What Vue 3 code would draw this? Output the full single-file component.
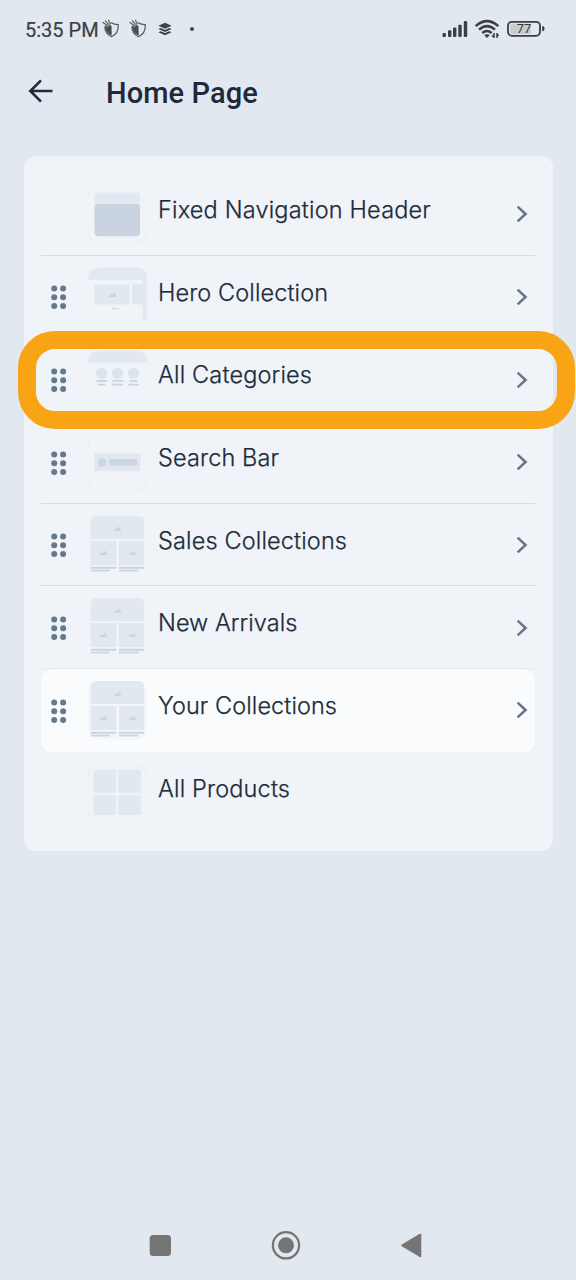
<script setup>
const rows = [
  { label: 'Fixed Navigation Header', kind: 'header', drag: false, arrow: true, w: 272.8 },
  { label: 'Hero Collection', kind: 'hero', drag: true, arrow: true, w: 170 },
  { label: 'All Categories', kind: 'categories', drag: true, arrow: true, w: 154 },
  { label: 'Search Bar', kind: 'search', drag: true, arrow: true, w: 121 },
  { label: 'Sales Collections', kind: 'grid', drag: true, arrow: true, w: 189 },
  { label: 'New Arrivals', kind: 'grid', drag: true, arrow: true, w: 139.3 },
  { label: 'Your Collections', kind: 'grid', drag: true, arrow: true, w: 179 },
  { label: 'All Products', kind: 'products', drag: false, arrow: false, w: 132 },
]
const dots = [0, 1, 2, 3, 4, 5]
</script>

<template>
  <div class="screen">
    <header class="status">
      <span class="time">5:35 PM</span>
      <svg v-for="n in 2" :key="n" class="shield" width="18" height="20" viewBox="0 0 18 20">
        <path d="M7 4.6L9.5 3.8C11.3 5.2 13.6 5.6 16.3 5.6C16.5 11.5 14.5 15.7 9.5 17.8C5.2 15.8 2.9 12 2.8 7.5" fill="none" stroke="#55585c" stroke-width="1.2" />
        <path d="M3 7L7.5 5L9.5 7L9.7 16.8C5.8 15 3.4 12 3 7Z" fill="#494c50" />
        <path d="M1 3.5L4.5 6M3.5 1.8L6 5M6.7 1L7.5 5" stroke="#55585c" stroke-width="1.2" stroke-linecap="round" />
        <path d="M4.3 8L7.5 6.2M6.5 4L9.2 6.5" stroke="#c5cad0" stroke-width="0.8" />
      </svg>
      <svg class="layers" width="14" height="14" viewBox="0 0 14 14">
        <path d="M7 .8L13.6 3.7L7 6.8L.4 3.7Z" fill="#3e4145" />
        <path d="M.4 7L2.7 6L7 8L11.3 6L13.6 7L7 10ZM.4 10.2L2.7 9.2L7 11.1L11.3 9.2L13.6 10.2L7 13.2Z" fill="#3e4145" />
      </svg>
      <i class="more"></i>
      <span class="grow"></span>
      <svg class="system" width="104" height="22" viewBox="0 0 104 22">
        <g fill="#3b3e42">
          <rect x="0.5" y="15" width="3.4" height="4" rx="1" />
          <rect x="6" y="12.3" width="3.4" height="6.7" rx="1" />
          <rect x="11" y="9.5" width="3.4" height="9.5" rx="1" />
          <rect x="16.3" y="6.7" width="3.4" height="12.3" rx="1" />
          <rect x="21.8" y="3" width="3.4" height="16" rx="1" />
        </g>
        <g fill="none" stroke="#3b3e42" stroke-width="2.5">
          <path d="M33.7 8.1Q45 -1.9 56.3 8.1" />
          <path d="M37 11.6Q45 4.6 53 11.6" />
          <path d="M40.3 15Q45 10.9 49.7 15" />
        </g>
        <path d="M42.3 17.2Q45 15.1 47.7 17.2L45 20Z" fill="#3b3e42" />
        <path d="M52 15V20M51.8 18H49.7M55 15V20M55 17.2H57" fill="none" stroke="#3b3e42" stroke-width="1.5" />
        <rect x="66" y="3.8" width="32" height="14" rx="4" fill="none" stroke="#3b3e42" stroke-width="1.8" />
        <path d="M69.5 5.8H89V16H69.5Q68.3 16 68.3 14.5V7.2Q68.3 5.8 69.5 5.8Z" fill="#c8ccd1" />
        <path d="M100.2 8.1Q102.5 8.1 102.5 10.7Q102.5 13.3 100.2 13.3Z" fill="#3b3e42" />
        <text x="82" y="15.2" class="battery" text-anchor="middle">77</text>
      </svg>
    </header>

    <div class="title-bar">
      <svg class="back" width="26" height="26" viewBox="0 0 26 26">
        <path d="M24.5 13H3M13 2.3L2.3 13L13 23.7" fill="none" stroke="#202b40" stroke-width="2.6" />
      </svg>
      <h1>Home Page</h1>
    </div>

    <main class="card">
      <div v-for="(row, i) in rows" :key="row.label" class="row" :class="{ active: i === 6, last: i > 6, faint: i === 5 }">
        <div class="handle">
          <svg v-if="row.drag" width="16" height="24" viewBox="0 0 16 24">
            <circle v-for="d in dots" :key="d" :cx="3.2 + (d % 2) * 8.9" :cy="3.4 + Math.floor(d / 2) * 8.8" r="3" fill="#64798c" />
          </svg>
        </div>

        <svg class="thumb" width="59" height="59" viewBox="0 0 59 59">
          <rect v-if="row.kind === 'grid' && i === 6" x="0.5" y="0.5" width="58" height="58" rx="11" fill="#f3f6fa" />
          <path v-if="['header', 'search', 'products'].includes(row.kind)" d="M.5 13Q.5 .5 13 .5M46 .5Q58.5 .5 58.5 13M58.5 46Q58.5 58.5 46 58.5M13 58.5Q.5 58.5 .5 46" fill="none" stroke="#e6ecf3" />
          <g v-if="row.kind === 'header'">
            <rect x="6.5" y="7.5" width="45.5" height="20" rx="3" fill="#e2e9f0" />
            <rect x="6.5" y="19" width="45.5" height="32.3" rx="4" fill="#c9d3e0" />
          </g>
          <g v-else-if="row.kind === 'hero'">
            <path d="M0 12.8Q0 .5 12 .5H47Q59 .5 59 12V51.5Q59 54.5 55 54.5L54.3 17V12.8Z" fill="#e1e8f0" />
            <rect x="6.5" y="17.5" width="35" height="20" fill="#e1e8f0" />
            <path d="M44 17.5H56V37.5H44Z" fill="#e1e8f0" />
            <path d="M21 30L23 27.3L24.3 28.5L26 25.5L28.5 30Z" fill="#c9d2dd" />
            <g fill="#c3cdd9"><circle cx="25" cy="41.5" r=".8" /><circle cx="27.3" cy="41.5" r=".8" /><circle cx="29.6" cy="41.5" r=".8" /></g>
          </g>
          <g v-else-if="row.kind === 'categories'">
            <path d="M0 12.5Q0 .7 12 .7H47Q59 .7 59 12.5Z" fill="#e1e8f0" />
            <g v-for="n in 3" :key="n">
              <circle :cx="-2.4 + n * 16" cy="23.3" r="5.7" fill="#dce4ed" />
              <rect :x="n === 3 ? 41.5 : -7.8 + n * 16" y="30" :width="n === 3 ? 8 : 11" height="1.8" fill="#cbd5e0" />
              <rect :x="n === 1 ? 10 : -7.8 + n * 16" y="33.7" :width="n === 1 ? 7.5 : 11" height="1.8" fill="#cbd5e0" />
            </g>
          </g>
          <g v-else-if="row.kind === 'search'">
            <rect x="6.3" y="20.3" width="46" height="18" rx="2" fill="#e0e7ef" />
            <circle cx="14" cy="29.3" r="4.2" fill="#cbd6e2" />
            <rect x="21" y="26" width="28" height="6.6" rx="1.5" fill="#cbd6e2" />
          </g>
          <g v-else-if="row.kind === 'grid'">
            <path d="M2.8 23V6Q2.8 0 9 0H50Q56.2 0 56.2 6V23Z" fill="#e1e8f0" />
            <rect x="2.8" y="25" width="25.4" height="24" fill="#e1e8f0" />
            <rect x="31" y="25" width="25.2" height="24" fill="#e1e8f0" />
            <path d="M26 15L28 12L29.5 13.3L30.5 10L33.5 15ZM12 39L14 36L15.3 37.3L17 34.3L19.5 39ZM40.5 39L42.5 36L43.8 37.3L45.5 34.3L48 39Z" fill="#cbd4df" />
            <g fill="#cbd5e1">
              <rect x="2.8" y="50.8" width="25.4" height="2" /><rect x="31" y="50.8" width="25.2" height="2" />
              <rect x="2.8" y="53.7" width="19" height="1.7" /><rect x="31" y="53.7" width="19.5" height="1.7" />
            </g>
          </g>
          <g v-else fill="#e1e8f0">
            <path d="M9 5.5H28V28.7H5.7V8.5Q5.7 5.5 9 5.5ZM30.3 5.5H50Q53 5.5 53 8.5V28.7H30.3ZM5.7 31.5H28V51H8.7Q5.7 51 5.7 48ZM30.3 31.5H53V48Q53 51 50 51H30.3Z" />
          </g>
        </svg>

        <svg class="label" width="300" height="34" viewBox="0 0 300 34">
          <text x="0" y="25" :textLength="row.w">{{ row.label }}</text>
        </svg>
        <svg v-if="row.arrow" class="chevron" width="14" height="18" viewBox="0 0 14 18">
          <path d="M2.6 1.7L10.6 9L2.6 16.3" fill="none" stroke="#64748b" stroke-width="2.5" />
        </svg>
      </div>
      <div class="highlight"></div>
    </main>

    <footer class="navigation">
      <svg width="288" height="32" viewBox="0 0 288 32">
        <rect x="5.7" y="5" width="21.3" height="21" rx="3.5" fill="#757575" />
        <circle cx="142" cy="15.3" r="13.1" fill="none" stroke="#757575" stroke-width="2.3" />
        <circle cx="142" cy="15.3" r="8" fill="#757575" />
        <path d="M276.3 4.7V26.2L258.3 15.3Z" fill="#757575" stroke="#757575" stroke-width="2" stroke-linejoin="round" />
      </svg>
    </footer>
  </div>
</template>

<style>
body { background: #e1e8f0; }
</style>

<style scoped>
.screen { width: 576px; height: 1280px; box-sizing: border-box; background: #e1e8f0; display: flex; flex-direction: column; overflow: hidden; font-family: Inter, "Liberation Sans", sans-serif; }
.status { height: 58px; display: flex; align-items: center; padding: 0 30px 0 25px; flex: none; box-sizing: border-box; }
.time { width: 77.3px; padding-top: 2px; font: 400 20px/24px Roboto, sans-serif; color: #3c3f43; -webkit-text-stroke: 0.2px #3c3f43; white-space: nowrap; }
.shield { margin-right: 9px; flex: none; }
.layers { margin-left: 1.7px; }
.more { width: 4px; height: 4px; border-radius: 50%; background: #44474b; margin-left: 18px; }
.grow { flex: 1; }
.battery { font: 400 12.8px Roboto, sans-serif; fill: #33363a; }
.title-bar { height: 98px; box-sizing: border-box; padding: 16px 0 0 28px; display: flex; align-items: flex-start; flex: none; }
.back { margin-top: 4px; }
h1 { margin: 0 0 0 52px; font: 500 29px/38px Roboto, sans-serif; letter-spacing: 0.1px; color: #1e293b; white-space: nowrap; }
.card { position: relative; width: 529.5px; height: 695px; margin-left: 23.5px; box-sizing: border-box; padding: 17px 18px 0 17.5px; border-radius: 12px; background: #f0f4f9; flex: none; }
.row { height: 82.7px; box-sizing: border-box; display: flex; align-items: flex-start; border-bottom: 1px solid #d3dce6; }
.row.faint { border-color: #e3e9f0; }
.row.active { background: #f9fbfd; border-radius: 12px; border-color: transparent; }
.row.last { border: 0; }
.handle { width: 47px; padding: 29.6px 0 0 9.7px; box-sizing: border-box; }
.thumb { margin-top: 11.8px; flex: none; }
.label { margin: 20px 0 0 11.3px; overflow: visible; font: 350 23.5px Inter, sans-serif; font-optical-sizing: none; fill: #202b3b; stroke: #202b3b; stroke-width: 0.25px; flex: none; }
.chevron { margin: 32.3px 0 0 56.8px; flex: none; }
.highlight { position: absolute; left: -5.5px; top: 175px; width: 557px; height: 98px; box-sizing: border-box; border: 18px solid #f9a414; border-radius: 37px; }
.navigation { margin-top: auto; height: 50px; padding-left: 144px; flex: none; }
</style>
